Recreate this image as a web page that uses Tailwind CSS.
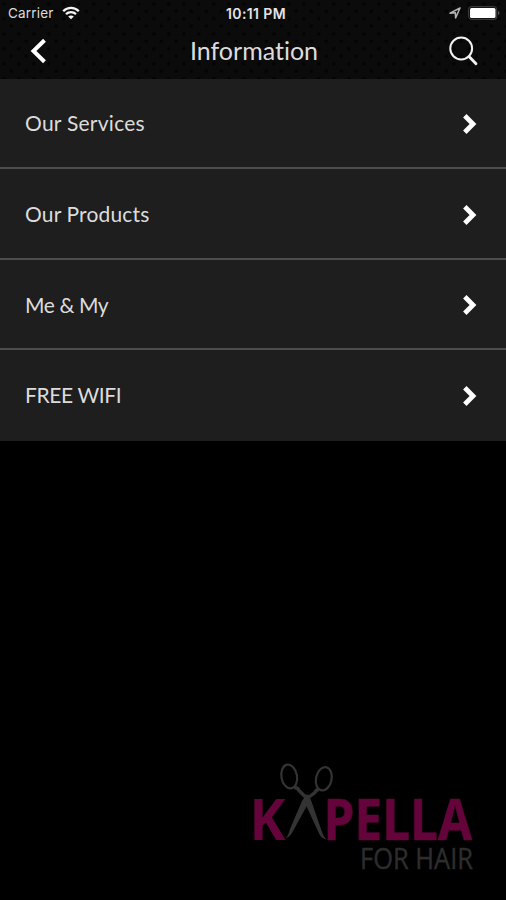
<!DOCTYPE html>
<html lang="en">
<head>
    <meta charset="UTF-8">
    <meta name="viewport" content="width=device-width, initial-scale=1.0">
    <title>Information</title>
    <script src="https://cdn.jsdelivr.net/npm/@tailwindcss/browser@4"></script>
</head>
<body class="bg-black">
    <div class="w-[506px] h-[900px] flex flex-col overflow-hidden bg-black font-[Lato,sans-serif] text-[#dcdcdc]">
        <!-- Header -->
        <header class="h-[79px] shrink-0 bg-[#0b0b0c] bg-[radial-gradient(circle_at_25%_25%,#040404_1px,transparent_2.5px),radial-gradient(circle_at_75%_75%,#040404_1px,transparent_2.5px)] bg-[size:15px_15px]">
            <!-- Status bar -->
            <div class="h-[26px] pl-2 pr-[6px] grid grid-cols-3 items-center font-[Inter,sans-serif] text-[13.5px] leading-none">
                <div class="flex items-center gap-[7px]">
                    <span class="w-[47px] pt-px tracking-[0.2px]">Carrier</span>
                    <svg class="w-[18px] h-[14px]" viewBox="0 0 18 14" fill="none" stroke="#f4f4f4" stroke-width="2.3">
                        <path d="M1.2 5.2C5.6 .8 12.4 .8 16.8 5.2M4 8.1c2.8-2.7 7.2-2.7 10 0"/>
                        <path d="M9 13.2 6.2 10.5c1.6-1.4 4-1.4 5.6 0z" fill="#f4f4f4" stroke="none"/>
                    </svg>
                </div>
                <span class="pt-[2px] pl-[4px] text-center font-semibold text-[14px] tracking-[0.4px] text-[#e4e4e4]">10:11 PM</span>
                <div class="flex items-center justify-end gap-[7px]">
                    <svg class="w-3 h-3" viewBox="0 0 12 12" fill="none" stroke="#b5b5b5" stroke-width="1.5" stroke-linejoin="round">
                        <path d="M11 1 1 6.200l5.400-.4.200 5.200z"/>
                    </svg>
                    <svg class="w-[32px] h-[14px]" viewBox="0 0 32 14">
                        <rect x=".7" y=".7" width="28" height="12.6" rx="2.5" fill="none" stroke="#444"/>
                        <rect x="2" y="2" width="25.5" height="10" rx="1.5" fill="#fff"/>
                        <path d="M30 5v4q1.5-.5 1.5-2T30 5" fill="#555"/>
                    </svg>
                </div>
            </div>
            <!-- Navigation -->
            <nav class="h-[50px] pl-[30px] pr-[28px] flex items-center justify-between">
                <svg class="w-[17px] h-[26px]" viewBox="0 0 17 26" fill="none" stroke="#fff" stroke-width="4">
                    <path d="M14.5 2.3 3.5 13l11 10.7"/>
                </svg>
                <h1 class="text-[25px] leading-none [font-variant-ligatures:none] pl-3 pb-px">Information</h1>
                <svg class="w-[29px] h-[30px]" viewBox="0 0 29 30" fill="none" stroke="#f2f2f2">
                    <circle cx="12.2" cy="12.5" r="10.9" stroke-width="2"/>
                    <path d="m20 20.5 7 7.3" stroke-width="2.8" stroke-linecap="round"/>
                </svg>
            </nav>
        </header>

        <!-- Menu -->
        <ul class="shrink-0 bg-[#1e1e1e] text-[21px] leading-none">
            <li class="h-[90px] pl-[25px] pr-[29px] flex items-center justify-between border-b-2 border-[#4d4d4d]">
                <span class="tracking-[0.25px] pb-px">Our Services</span>
                <svg class="w-[15px] h-[22px] mt-[2px]" viewBox="0 0 15 22" fill="none" stroke="#fff" stroke-width="4.8"><path d="m2.8 2.8 8.2 8.2-8.2 8.2"/></svg>
            </li>
            <li class="h-[91px] pl-[25px] pr-[29px] flex items-center justify-between border-b-2 border-[#4d4d4d]">
                <span class="tracking-[0.15px]">Our Products</span>
                <svg class="w-[15px] h-[22px] mt-[2px]" viewBox="0 0 15 22" fill="none" stroke="#fff" stroke-width="4.8"><path d="m2.8 2.8 8.2 8.2-8.2 8.2"/></svg>
            </li>
            <li class="h-[90px] pl-[25px] pr-[29px] flex items-center justify-between border-b-2 border-[#4d4d4d]">
                <span class="tracking-[-0.4px]">Me &amp; My</span>
                <svg class="w-[15px] h-[22px] mt-[2px]" viewBox="0 0 15 22" fill="none" stroke="#fff" stroke-width="4.8"><path d="m2.8 2.8 8.2 8.2-8.2 8.2"/></svg>
            </li>
            <li class="h-[91px] pl-[25px] pr-[29px] flex items-center justify-between">
                <span class="tracking-[-0.4px] pb-[2px]">FREE WIFI</span>
                <svg class="w-[15px] h-[22px]" viewBox="0 0 15 22" fill="none" stroke="#fff" stroke-width="4.8"><path d="m2.8 2.8 8.2 8.2-8.2 8.2"/></svg>
            </li>
        </ul>

        <!-- Logo -->
        <footer class="flex-1 flex items-end justify-end pr-[26px] pb-[20px]">
            <svg class="w-[230px] h-[120px] overflow-visible" viewBox="250 760 230 120" role="img" aria-label="Kapella for hair">
                <g fill="#64043b" font-family="Open Sans, sans-serif" font-weight="700" font-size="57">
                    <text x="249.5" y="840" textLength="36" lengthAdjust="spacingAndGlyphs">K</text>
                    <text x="323.5" y="840" textLength="148.5" lengthAdjust="spacingAndGlyphs" stroke="#64043b" stroke-width=".6">PELLA</text>
                </g>
                <text x="360" y="868.5" textLength="113" lengthAdjust="spacingAndGlyphs" fill="#2d2d2d" stroke="#2d2d2d" stroke-width=".4" font-family="Open Sans, sans-serif" font-size="28.5">FOR HAIR</text>
                <!-- Scissors -->
                <g fill="none" stroke="#333" stroke-width="2.2">
                    <ellipse cx="289.2" cy="776.5" rx="7.8" ry="12" transform="rotate(-10 289.2 776.5)"/>
                    <ellipse cx="323.8" cy="778.8" rx="7.8" ry="11.8" transform="rotate(12 323.8 778.8)"/>
                    <path d="M294 787.500q4 0 5 3l7 7M319 789.500q-3 0-4 3l-8 6" stroke-width="3.4"/>
                </g>
                <path d="M304 795l4-.5q2 3 3.500 7L322 832q1.500 5 4.500 7.500-5-1-7-5L304.500 802z" fill="#333"/>
                <path d="M310 797l-5-.5q-3 4-4.500 8L290 829q-1 5-4 9.500 4-2 6-5.500L309 802z" fill="#333"/>
            </svg>
        </footer>
    </div>
</body>
</html>
